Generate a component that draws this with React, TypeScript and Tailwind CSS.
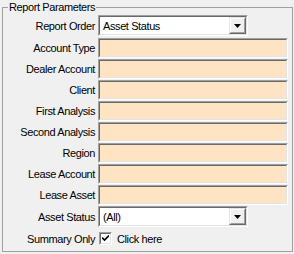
import React from "react";

const sunkenOuter =
  "border border-t-[#a0a0a0] border-l-[#a0a0a0] border-b-white border-r-white";
const sunkenInner =
  "border border-t-[#696969] border-l-[#696969] border-b-[#e3e3e3] border-r-[#e3e3e3]";

function TextBox() {
  return (
    <div className={`w-[190px] h-[20px] ${sunkenOuter}`}>
      <div className={`w-full h-full bg-[#ffe4c4] ${sunkenInner}`} />
    </div>
  );
}

function Combo({ value }: { value: string }) {
  return (
    <div className={`w-[150px] h-[21px] ${sunkenOuter}`}>
      <div className={`w-full h-full bg-white flex items-center ${sunkenInner}`}>
        <span className="flex-1 pl-[3px] leading-[14px]">{value}</span>
        <div className="w-[17px] h-full border border-t-[#e3e3e3] border-l-[#e3e3e3] border-b-[#696969] border-r-[#696969]">
          <div className="w-full h-full bg-[#f0f0f0] border border-t-white border-l-white border-b-[#a0a0a0] border-r-[#a0a0a0] flex items-center justify-center">
            <svg width="7" height="4" viewBox="0 0 7 4">
              <polygon points="0,0 7,0 3.5,4" fill="#000" />
            </svg>
          </div>
        </div>
      </div>
    </div>
  );
}

function Row({ label, children, h }: { label: string; children: React.ReactNode; h: string }) {
  return (
    <div className={`flex items-center gap-[3px] ${h}`}>
      <div className="w-[92px] text-right leading-[14px] whitespace-nowrap">{label}</div>
      {children}
    </div>
  );
}

export default function App() {
  const fields = [
    "Account Type",
    "Dealer Account",
    "Client",
    "First Analysis",
    "Second Analysis",
    "Region",
    "Lease Account",
    "Lease Asset",
  ];
  return (
    <div className="w-[294px] h-[254px] bg-[#f0f0f0] pl-[2px] font-['Liberation_Sans',Arial,sans-serif] text-[11px] tracking-[-0.4px] text-black">
      <fieldset className="w-[291px] h-[252px] border border-[#a0a0a0]">
        <legend className="ml-[5px] px-[1px] leading-[14px]">Report Parameters</legend>
        <div className="flex flex-col pt-[1px]">
          <Row label="Report Order" h="h-[21px]">
            <Combo value="Asset Status" />
          </Row>
          <div className="flex flex-col gap-[1px] mt-[2px]">
            {fields.map((f) => (
              <Row key={f} label={f} h="h-[20px]">
                <TextBox />
              </Row>
            ))}
          </div>
          <div className="mt-[1px]">
            <Row label="Asset Status" h="h-[21px]">
              <Combo value="(All)" />
            </Row>
          </div>
          <div className="mt-[3px]">
            <Row label="Summary Only" h="h-[17px]">
              <div className="flex items-center gap-[5px] ml-[1px]">
                <div className={`w-[13px] h-[13px] ${sunkenOuter}`}>
                  <div className={`w-full h-full bg-white flex items-center justify-center ${sunkenInner}`}>
                    <svg width="7" height="7" viewBox="0 0 7 7">
                      <path d="M0 2.5 L2.5 5 L7 0.5" stroke="#000" strokeWidth="1.6" fill="none" />
                    </svg>
                  </div>
                </div>
                <span className="leading-[14px]">Click here</span>
              </div>
            </Row>
          </div>
        </div>
      </fieldset>
    </div>
  );
}
